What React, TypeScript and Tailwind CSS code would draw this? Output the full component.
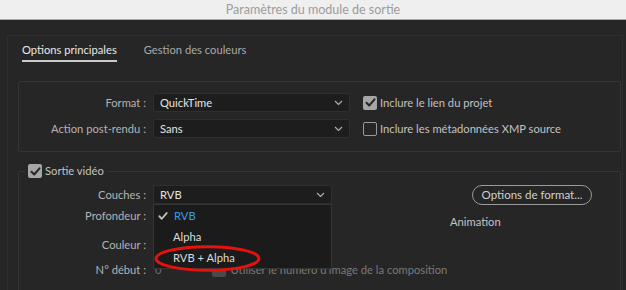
import React from "react";

const font = { fontFamily: "Lato, 'Noto Sans', sans-serif" };

function Chevron() {
  return (
    <svg width="9" height="6" viewBox="0 0 9 6" className="shrink-0">
      <path d="M1 1 L4.5 4.5 L8 1" fill="none" stroke="#b0b0b0" strokeWidth="1.2" />
    </svg>
  );
}

function Check({ color = "#262626", size = 13 }: { color?: string; size?: number }) {
  return (
    <svg width={size} height={size} viewBox="0 0 13 13">
      <path d="M2.5 6.8 L5.2 9.5 L10.5 3.3" fill="none" stroke={color} strokeWidth="2" strokeLinecap="round" strokeLinejoin="round" />
    </svg>
  );
}

function CheckBox({ checked }: { checked: boolean }) {
  return checked ? (
    <div className="w-[14px] h-[14px] rounded-[2px] bg-[#a6a6a6] flex items-center justify-center shrink-0">
      <Check />
    </div>
  ) : (
    <div className="w-[14px] h-[14px] rounded-[2px] border-[1.5px] border-[#9a9a9a] shrink-0" />
  );
}

function Select({ value, width }: { value: string; width: number }) {
  return (
    <div
      className="h-[19px] rounded-[3px] bg-[#1d1d1d] border border-[#2f2f2f] flex items-center justify-between pl-[6px] pr-[6px] text-[#e4e4e4]"
      style={{ width }}
    >
      <span>{value}</span>
      <Chevron />
    </div>
  );
}

function Label({ children }: { children: React.ReactNode }) {
  return <div className="w-[128px] text-right text-[#b3b3b3] shrink-0 pr-[1px]">{children}</div>;
}

export default function App() {
  return (
    <div className="w-[626px] h-[290px] bg-[#262626] overflow-hidden text-[11.2px] leading-[16px]" style={font}>
      <div className="h-[20px] bg-[#efefef] border-b border-[#a8a8a8] flex items-center justify-center text-[#9c9c9c] text-[12.5px]">
        Paramètres du module de sortie
      </div>
      <div className="mt-[15px] ml-[7px] mr-[3px] h-[300px] border-t border-l border-r border-[#2f2f2f] bg-[#262626]">
        <div className="flex pl-[14px] pt-[6px] gap-[27px]">
          <div className="flex flex-col">
            <span className="text-[#e8e8e8]">Options principales</span>
            <div className="mt-[2px] h-[2px] bg-[#c9c9c9]" />
          </div>
          <span className="text-[#a9a9a9]">Gestion des couleurs</span>
        </div>

        <div className="mt-[19px] ml-[10px] mr-[1px] border border-[#343434] rounded-[2px] pt-[11px] pb-[13px] flex flex-col gap-[7px]">
          <div className="flex items-center h-[19px]">
            <Label>Format :</Label>
            <div className="ml-[6px]">
              <Select value="QuickTime" width={197} />
            </div>
            <div className="ml-[13px] flex items-center gap-[3px] text-[#c2c2c2]">
              <CheckBox checked />
              <span>Inclure le lien du projet</span>
            </div>
          </div>
          <div className="flex items-center h-[19px]">
            <Label>Action post-rendu :</Label>
            <div className="ml-[6px]">
              <Select value="Sans" width={197} />
            </div>
            <div className="ml-[13px] flex items-center gap-[3px] text-[#c2c2c2]">
              <CheckBox checked={false} />
              <span>Inclure les métadonnées XMP source</span>
            </div>
          </div>
        </div>

        <fieldset className="mt-[11px] ml-[10px] mr-[1px] border border-[#343434] rounded-[2px] h-[200px]">
          <legend className="ml-[6px] px-[3px] flex items-center gap-[3px] text-[#c2c2c2]">
            <CheckBox checked />
            <span>Sortie vidéo</span>
          </legend>
          <div className="pt-[6px] flex flex-col">
            <div className="flex items-center h-[19px]">
              <Label>Couches :</Label>
              <div className="ml-[6px] relative">
                <Select value="RVB" width={179} />
                <div className="absolute left-0 top-full w-[179px] bg-[#1b1b1b] border border-[#353535] z-10 flex flex-col">
                  <div className="h-[21px] flex items-center pl-[3px] gap-[5px] text-[#3a9bf0]">
                    <Check color="#bdbdbd" size={12} />
                    <span>RVB</span>
                  </div>
                  <div className="h-[21px] flex items-center pl-[19px] text-[#dcdcdc]">Alpha</div>
                  <div className="h-[21px] flex items-center pl-[19px] text-[#dcdcdc]">RVB + Alpha</div>
                  <svg className="absolute left-[0px] top-[40px]" width="107" height="27" viewBox="0 0 107 27">
                    <ellipse cx="53.5" cy="13.5" rx="51.5" ry="11.8" fill="none" stroke="#e5120d" strokeWidth="3" />
                  </svg>
                </div>
              </div>
              <div className="ml-[140px] h-[20px] w-[120px] rounded-full border-[1.5px] border-[#9a9a9a] flex items-center justify-center text-[#d0d0d0] text-[11.5px]">
                Options de format...
              </div>
            </div>
            <div className="flex items-center h-[19px] mt-[2px]">
              <Label>Profondeur :</Label>
              <span className="ml-[303px] mt-[12px] text-[#c4c4c4]">Animation</span>
            </div>
            <div className="flex items-center h-[19px] mt-[10px]">
              <Label>Couleur :</Label>
            </div>
            <div className="flex items-center h-[19px] mt-[6px]">
              <Label>N° début :</Label>
              <span className="ml-[8px] text-[#6c6c6c]">0</span>
              <div className="ml-[50px] w-[14px] h-[14px] rounded-[2px] bg-[#4a4a4a]" />
              <span className="ml-[5px] text-[#7a7a7a]">Utiliser le numéro d'image de la composition</span>
            </div>
          </div>
        </fieldset>
      </div>
    </div>
  );
}
